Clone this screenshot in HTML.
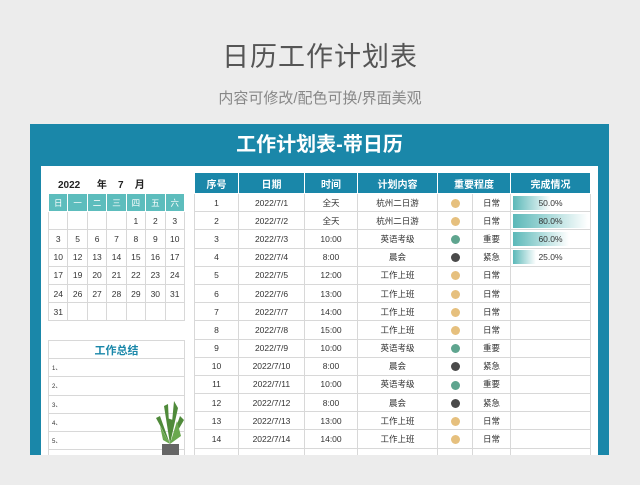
<!DOCTYPE html>
<html><head><meta charset="utf-8"><style>
*{margin:0;padding:0;box-sizing:border-box}
body{width:640px;height:485px;background:#ececec;font-family:"Liberation Sans","Noto Sans CJK SC",sans-serif;position:relative;overflow:hidden}
.t1{position:absolute;top:35px;left:0;width:640px;text-align:center;font-size:27px;color:#555;letter-spacing:1px}
.t2{position:absolute;top:87px;left:0;width:640px;text-align:center;font-size:15px;color:#888}
.panel{position:absolute;left:30px;top:124px;width:579px;height:331px;background:#1a87a9}
.ph{position:absolute;left:0;top:4px;width:579px;text-align:center;color:#fff;font-size:20px;font-weight:bold}
.inner{position:absolute;left:11px;top:42px;width:557px;height:289px;background:#fff}
.abs{position:absolute}
table{border-collapse:collapse;position:absolute;font-size:8.5px;color:#333;text-align:center}
td{border:1px solid #d8d8d8;padding:0}
.cal td{width:19.6px;height:18.2px}
.cal .h td{background:#5dbdbd;color:#fff;border-color:#fff}
.main td{height:18.2px}
.main .h td{background:#1a87a9;color:#fff;border-color:#fff;font-weight:bold;font-size:10px;height:21px}
.dot{display:inline-block;width:9px;height:9px;border-radius:50%;vertical-align:middle}
.y{background:#e6c07e}.g{background:#5fa58f}.k{background:#4a4a4a}
.bar{position:relative;height:14px;line-height:14px;margin:0 2px}
.bar i{position:absolute;left:0;top:0;bottom:0;background:linear-gradient(90deg,#5bb8b8,#fff)}
.bar span{position:relative}
.sum td{height:18.2px;text-align:left;font-size:6px;padding-left:3px;width:137px}
</style></head><body>
<div class="t1">日历工作计划表</div>
<div class="t2">内容可修改/配色可换/界面美观</div>
<div class="panel">
<div class="ph">工作计划表-带日历</div>
<div class="inner"></div>
</div>
<div class="abs" style="left:58px;top:176px;font-size:10px;font-weight:bold;color:#222">2022&nbsp;&nbsp;&nbsp;&nbsp;&nbsp;&nbsp;年&nbsp;&nbsp;&nbsp;&nbsp;7&nbsp;&nbsp;&nbsp;&nbsp;月</div>
<table class="cal" style="left:48px;top:193px;width:137px">
<tr class="h"><td>日</td><td>一</td><td>二</td><td>三</td><td>四</td><td>五</td><td>六</td></tr>
<tr><td></td><td></td><td></td><td></td><td>1</td><td>2</td><td>3</td></tr>
<tr><td>3</td><td>5</td><td>6</td><td>7</td><td>8</td><td>9</td><td>10</td></tr>
<tr><td>10</td><td>12</td><td>13</td><td>14</td><td>15</td><td>16</td><td>17</td></tr>
<tr><td>17</td><td>19</td><td>20</td><td>21</td><td>22</td><td>23</td><td>24</td></tr>
<tr><td>24</td><td>26</td><td>27</td><td>28</td><td>29</td><td>30</td><td>31</td></tr>
<tr><td>31</td><td></td><td></td><td></td><td></td><td></td><td></td></tr>
</table>
<table class="sum" style="left:48px;top:340px;width:137px">
<tr><td style="text-align:center;font-size:11px;font-weight:bold;color:#1a87a9;padding:0">工作总结</td></tr>
<tr><td>1、</td></tr><tr><td>2、</td></tr><tr><td>3、</td></tr><tr><td>4、</td></tr><tr><td>5、</td></tr><tr><td></td></tr>
</table>
<svg class="abs" style="left:150px;top:396px" width="40" height="60">
<path d="M20 48 L14 10 L18 8 Z M20 48 L24 5 L28 12 Z M20 48 L30 20 L34 24 Z M20 48 L6 22 L10 20 Z M20 48 L17 22 L23 24 Z" fill="#4f8a3a"/>
<path d="M20 48 L27 25 L31 40 Z M20 48 L10 30 L13 44 Z" fill="#6aa84f"/>
<rect x="12" y="48" width="17" height="12" fill="#666"/>
</svg>
<table class="main" style="left:194px;top:172px;width:397px">
<tr class="h"><td style="width:44px">序号</td><td style="width:66px">日期</td><td style="width:53px">时间</td><td style="width:80px">计划内容</td><td colspan="2" style="width:74px">重要程度</td><td style="width:80px">完成情况</td></tr>
<tr><td>1</td><td>2022/7/1</td><td>全天</td><td>杭州二日游</td><td style="width:35px"><span class="dot y"></span></td><td>日常</td><td><div class="bar"><i style="width:50%"></i><span>50.0%</span></div></td></tr>
<tr><td>2</td><td>2022/7/2</td><td>全天</td><td>杭州二日游</td><td><span class="dot y"></span></td><td>日常</td><td><div class="bar"><i style="width:100%"></i><span>80.0%</span></div></td></tr>
<tr><td>3</td><td>2022/7/3</td><td>10:00</td><td>英语考级</td><td><span class="dot g"></span></td><td>重要</td><td><div class="bar"><i style="width:75%"></i><span>60.0%</span></div></td></tr>
<tr><td>4</td><td>2022/7/4</td><td>8:00</td><td>晨会</td><td><span class="dot k"></span></td><td>紧急</td><td><div class="bar"><i style="width:30%"></i><span>25.0%</span></div></td></tr>
<tr><td>5</td><td>2022/7/5</td><td>12:00</td><td>工作上班</td><td><span class="dot y"></span></td><td>日常</td><td></td></tr>
<tr><td>6</td><td>2022/7/6</td><td>13:00</td><td>工作上班</td><td><span class="dot y"></span></td><td>日常</td><td></td></tr>
<tr><td>7</td><td>2022/7/7</td><td>14:00</td><td>工作上班</td><td><span class="dot y"></span></td><td>日常</td><td></td></tr>
<tr><td>8</td><td>2022/7/8</td><td>15:00</td><td>工作上班</td><td><span class="dot y"></span></td><td>日常</td><td></td></tr>
<tr><td>9</td><td>2022/7/9</td><td>10:00</td><td>英语考级</td><td><span class="dot g"></span></td><td>重要</td><td></td></tr>
<tr><td>10</td><td>2022/7/10</td><td>8:00</td><td>晨会</td><td><span class="dot k"></span></td><td>紧急</td><td></td></tr>
<tr><td>11</td><td>2022/7/11</td><td>10:00</td><td>英语考级</td><td><span class="dot g"></span></td><td>重要</td><td></td></tr>
<tr><td>12</td><td>2022/7/12</td><td>8:00</td><td>晨会</td><td><span class="dot k"></span></td><td>紧急</td><td></td></tr>
<tr><td>13</td><td>2022/7/13</td><td>13:00</td><td>工作上班</td><td><span class="dot y"></span></td><td>日常</td><td></td></tr>
<tr><td>14</td><td>2022/7/14</td><td>14:00</td><td>工作上班</td><td><span class="dot y"></span></td><td>日常</td><td></td></tr>
<tr><td></td><td></td><td></td><td></td><td></td><td></td><td></td></tr>
</table>
<div class="abs" style="left:0;top:455px;width:640px;height:30px;background:#ececec"></div>
</body></html>
